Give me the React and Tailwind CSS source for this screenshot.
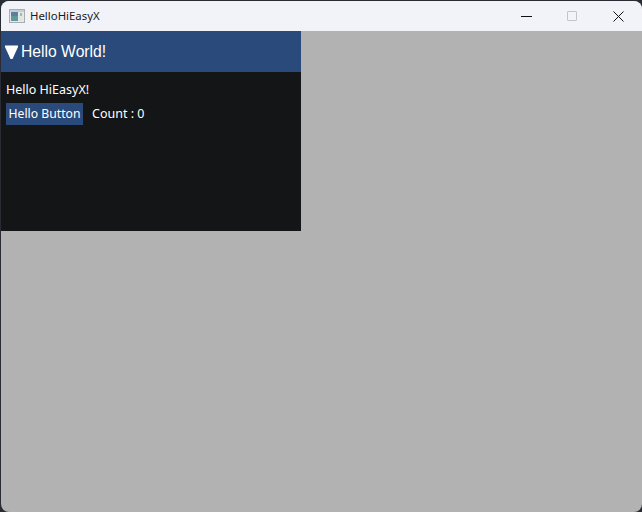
import React from "react";

function AppIcon() {
  return (
    <svg width="16" height="14" viewBox="0 0 16 14" className="shrink-0">
      <rect x="0.5" y="0.5" width="15" height="13" fill="#e6e8ea" stroke="#a9adb0" />
      <rect x="1" y="1" width="14" height="2" fill="#c9ccd0" />
      <rect x="2" y="3" width="7" height="9" fill="#5f9a98" />
      <rect x="2" y="3" width="7" height="4" fill="#5b7f9f" />
      <rect x="10" y="3" width="4" height="9" fill="#dfe7e4" />
      <rect x="11" y="4" width="2" height="3" fill="#9cc0a4" />
    </svg>
  );
}

export default function App() {
  const [count, setCount] = React.useState(0);

  return (
    <div className="w-[642px] h-[512px] bg-[#2a2c33] overflow-hidden font-['Noto_Sans',sans-serif]">
      <div className="w-[641px] h-[511px] ml-px mt-px rounded-t-[8px] rounded-b-[8px] overflow-hidden flex flex-col bg-[#b2b2b2]">
        {/* title bar */}
        <div className="h-[30px] shrink-0 bg-[#f1f3f9] flex items-center pl-[8px]">
          <AppIcon />
          <span className="ml-[5px] text-[11.4px] text-[#1a1a1a]">HelloHiEasyX</span>
          <div className="ml-auto flex items-center h-full pr-[1px]">
            <button className="w-[46px] h-full flex items-center justify-center">
              <span className="w-[11px] h-px bg-[#111]" />
            </button>
            <button className="w-[46px] h-full flex items-center justify-center">
              <span className="w-[10px] h-[10px] border border-[#c4c4c4] rounded-[1px]" />
            </button>
            <button className="w-[46px] h-full flex items-center justify-center">
              <svg width="11" height="11" viewBox="0 0 11 11" stroke="#111" strokeWidth="1" fill="none">
                <path d="M0.5 0.5 L10.5 10.5 M10.5 0.5 L0.5 10.5" />
              </svg>
            </button>
          </div>
        </div>

        {/* client area */}
        <div className="flex-1">
          <div className="w-[300px] h-[200px] bg-[#141517] flex flex-col">
            <div className="h-[41px] bg-[#294a7a] flex items-center pl-[4px]">
              <svg width="13" height="14" viewBox="0 0 13 14" className="shrink-0" fill="#fff">
                <path d="M0 0.5 H13 V2 L7.5 14 H5.5 L0 2 Z" />
              </svg>
              <span className="ml-[3px] text-[15.7px] text-white font-['Liberation_Sans',sans-serif]">Hello World!</span>
            </div>
            <div className="pl-[5px] pt-[9px] text-[12.5px] text-white">
              <div className="leading-[18px]">Hello HiEasyX!</div>
              <div className="flex items-center mt-[4px]">
                <button
                  onClick={() => setCount(count + 1)}
                  className="w-[77px] h-[22px] bg-[#294a7a] text-center text-[12.2px] leading-[22px]"
                >
                  Hello Button
                </button>
                <span className="ml-[9px]">Count : {count}</span>
              </div>
            </div>
          </div>
        </div>
      </div>
    </div>
  );
}
